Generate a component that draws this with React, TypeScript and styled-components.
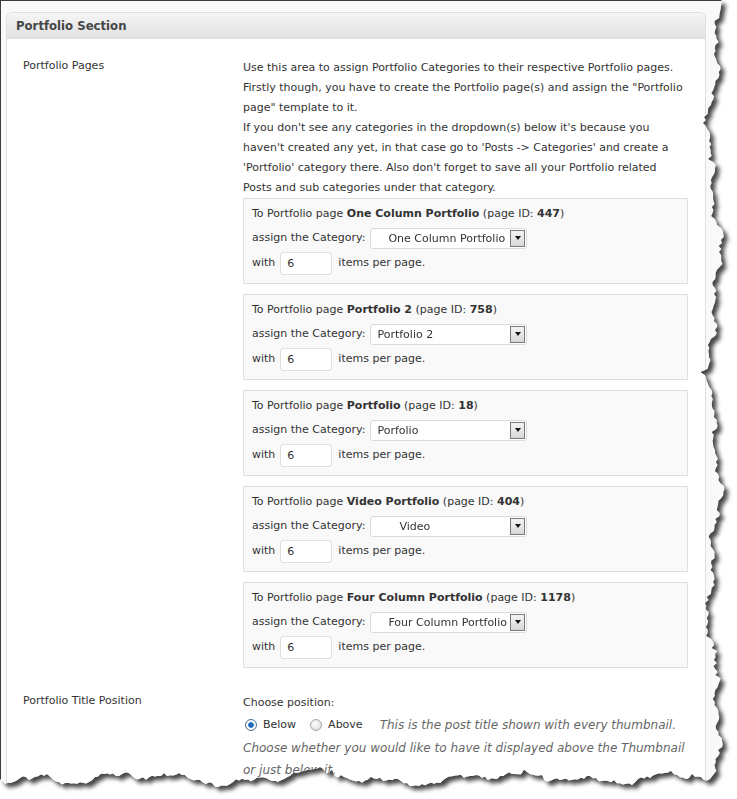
import React from "react";
import styled, { createGlobalStyle } from "styled-components";

const GlobalStyle = createGlobalStyle`
  html, body { margin: 0; padding: 0; background: #ffffff; }
  * { box-sizing: border-box; }
`;

function mulberry32(a: number) {
  return function () {
    a |= 0;
    a = (a + 0x6d2b79f5) | 0;
    let t = Math.imul(a ^ (a >>> 15), 1 | a);
    t = (t + Math.imul(t ^ (t >>> 7), 61 | t)) ^ t;
    return ((t ^ (t >>> 14)) >>> 0) / 4294967296;
  };
}

function buildTear(): string {
  const r = mulberry32(1234567);
  const pts: string[] = ["0px 0px"];
  const bottomBase = 779;
  for (let y = 0; y <= bottomBase - 6; y += 3) {
    const big = 5 * Math.sin(y / 37 + 1) + 3 * Math.sin(y / 13.3 + 2) + 2 * Math.sin(y / 5.1);
    const small = (r() - 0.5) * 3.5;
    const spike = r() > 0.93 ? -(r() * 5) : 0;
    const x = 714 + big + small + spike;
    pts.push(`${x.toFixed(1)}px ${y}px`);
  }
  for (let x = 710; x >= 0; x -= 3) {
    const big =
      4 * Math.sin(x / 29) + 3 * Math.sin(x / 11 + 1) + 1.5 * Math.sin(x / 4.3) - 4 * Math.max(0, Math.sin(x / 42 + 0.6)) ** 6;
    const small = (r() - 0.5) * 3;
    const spike = r() > 0.92 ? -(r() * 5) : 0;
    const y = bottomBase + big + small + spike;
    pts.push(`${x}px ${y.toFixed(1)}px`);
  }
  pts.push(`0px ${bottomBase}px`);
  return `polygon(${pts.join(", ")})`;
}

const tearPath = buildTear();

const Frame = styled.div`
  width: 737px;
  height: 799px;
  overflow: hidden;
  background: #ffffff;
`;

const Sheet = styled.div`
  width: 737px;
  height: 799px;
  filter: drop-shadow(4px 4px 2px rgba(0, 0, 0, 0.72));
`;

const Paper = styled.div<{ $clip: string }>`
  width: 737px;
  height: 799px;
  overflow: hidden;
  background: #f9f9f9;
  border-top: 1px solid #3c3c3c;
  border-left: 1px solid #3c3c3c;
  padding: 11px 0 0 5px;
  clip-path: ${(p) => p.$clip};
`;

const Panel = styled.div`
  width: 700px;
  min-height: 800px;
  background: #ffffff;
  border: 1px solid #dfdfdf;
  border-bottom: none;
  border-radius: 6px 6px 0 0;
`;

const PanelHeader = styled.div`
  height: 26px;
  padding: 0 9px;
  border-bottom: 1px solid #dfdfdf;
  border-radius: 5px 5px 0 0;
  background: linear-gradient(to bottom, #f5f5f5, #e1e1e1);
  font-family: "DejaVu Sans Condensed", "DejaVu Sans", sans-serif;
  font-weight: bold;
  font-size: 13px;
  line-height: 25px;
  color: #464646;
`;

const Body = styled.div`
  padding-top: 7px;
`;

const Row = styled.div`
  display: grid;
  grid-template-columns: 220px 450px;
  padding: 12px 0 13px 16px;
`;

const Label = styled.div`
  font-family: "DejaVu Sans", sans-serif;
  font-size: 11px;
  line-height: 16px;
  color: #333333;
`;

const Field = styled.div`
  font-family: "DejaVu Sans", sans-serif;
  font-size: 11px;
  line-height: 20px;
  color: #333333;
  white-space: nowrap;
`;

const AssignBox = styled.div`
  width: 445px;
  border: 1px solid #dfdfdf;
  background: #f9f9f9;
  padding: 5px 8px 7px;
  & + & {
    margin-top: 10px;
  }
`;

const BoxLine = styled.div`
  height: 20px;
  line-height: 20px;
`;

const ControlRow = styled.div<{ $h: number; $mt?: number }>`
  display: flex;
  align-items: center;
  height: ${(p) => p.$h}px;
  margin-top: ${(p) => p.$mt ?? 0}px;
`;

const SelectBox = styled.div`
  position: relative;
  width: 157px;
  height: 21px;
  margin-left: 5px;
  border: 1px solid #dcdcdc;
  border-radius: 3px;
  background: #ffffff;
  overflow: hidden;
`;

const SelectText = styled.div<{ $indent: number }>`
  padding-left: ${(p) => p.$indent}px;
  line-height: 19px;
  white-space: nowrap;
  color: #333333;
`;

const Arrow = styled.div`
  position: absolute;
  right: 1px;
  top: 1px;
  width: 15px;
  height: 17px;
  border: 1px solid #7a7a7a;
  background: linear-gradient(to bottom, #f4f4f4, #d8d8d8);
  display: flex;
  align-items: center;
  justify-content: center;
  &::after {
    content: "";
    width: 0;
    height: 0;
    border-left: 3.5px solid transparent;
    border-right: 3.5px solid transparent;
    border-top: 4px solid #111111;
  }
`;

const NumInput = styled.div`
  width: 52px;
  height: 23px;
  margin: 0 6px 0 5px;
  padding-left: 6px;
  border: 1px solid #dfdfdf;
  border-radius: 3px;
  background: #ffffff;
  line-height: 21px;
  color: #333333;
`;

const RadioRow = styled.div`
  display: flex;
  align-items: center;
  height: 24px;
`;

const Radio = styled.span<{ $checked?: boolean }>`
  display: inline-block;
  width: 12px;
  height: 12px;
  margin-left: 2px;
  border-radius: 50%;
  border: 1px solid ${(p) => (p.$checked ? "#4a6f8f" : "#a9a9a9")};
  background: ${(p) =>
    p.$checked
      ? "radial-gradient(circle at 50% 50%, #1d5fa8 0, #2a78c9 2.5px, #ffffff 3.2px, #e9e9e9 100%)"
      : "radial-gradient(circle at 40% 40%, #ffffff 0, #e6e6e6 60%, #cfcfcf 100%)"};
`;

const RadioLabel = styled.span<{ $gap: number }>`
  margin-left: 6px;
  margin-right: ${(p) => p.$gap}px;
`;

const Desc = styled.span`
  font-family: "DejaVu Sans", sans-serif;
  font-style: italic;
  font-size: 12px;
  color: #666666;
`;

const DescBlock = styled.div`
  font-family: "DejaVu Sans", sans-serif;
  font-style: italic;
  font-size: 12px;
  line-height: 22px;
  color: #666666;
  white-space: nowrap;
`;

type Item = { page: string; id: string; cat: string; indent: number };

const items: Item[] = [
  { page: "One Column Portfolio", id: "447", cat: "One Column Portfolio", indent: 17 },
  { page: "Portfolio 2", id: "758", cat: "Portfolio 2", indent: 6 },
  { page: "Portfolio", id: "18", cat: "Porfolio", indent: 6 },
  { page: "Video Portfolio", id: "404", cat: "Video", indent: 28 },
  { page: "Four Column Portfolio", id: "1178", cat: "Four Column Portfolio", indent: 17 },
];

export default function App() {
  return (
    <>
      <GlobalStyle />
      <Frame>
        <Sheet>
          <Paper $clip={tearPath}>
            <Panel>
              <PanelHeader>Portfolio Section</PanelHeader>
              <Body>
                <Row>
                  <Label>Portfolio Pages</Label>
                  <Field>
                    Use this area to assign Portfolio Categories to their respective Portfolio pages.
                    <br />
                    Firstly though, you have to create the Portfolio page(s) and assign the "Portfolio
                    <br />
                    page" template to it.
                    <br />
                    If you don't see any categories in the dropdown(s) below it's because you
                    <br />
                    haven't created any yet, in that case go to 'Posts -&gt; Categories' and create a
                    <br />
                    'Portfolio' category there. Also don't forget to save all your Portfolio related
                    <br />
                    Posts and sub categories under that category.
                    {items.map((it) => (
                      <AssignBox key={it.id}>
                        <BoxLine>
                          To Portfolio page <b>{it.page}</b> (page ID: <b>{it.id}</b>)
                        </BoxLine>
                        <ControlRow $h={24} $mt={2}>
                          assign the Category:
                          <SelectBox>
                            <SelectText $indent={it.indent}>{it.cat}</SelectText>
                            <Arrow />
                          </SelectBox>
                        </ControlRow>
                        <ControlRow $h={26}>
                          with
                          <NumInput>6</NumInput>
                          items per page.
                        </ControlRow>
                      </AssignBox>
                    ))}
                  </Field>
                </Row>
                <Row>
                  <Label>Portfolio Title Position</Label>
                  <Field>
                    Choose position:
                    <RadioRow>
                      <Radio $checked />
                      <RadioLabel $gap={12}>Below</RadioLabel>
                      <Radio />
                      <RadioLabel $gap={17}>Above</RadioLabel>
                      <Desc>This is the post title shown with every thumbnail.</Desc>
                    </RadioRow>
                    <DescBlock>
                      Choose whether you would like to have it displayed above the Thumbnail
                      <br />
                      or just below it.
                    </DescBlock>
                  </Field>
                </Row>
              </Body>
            </Panel>
          </Paper>
        </Sheet>
      </Frame>
    </>
  );
}
